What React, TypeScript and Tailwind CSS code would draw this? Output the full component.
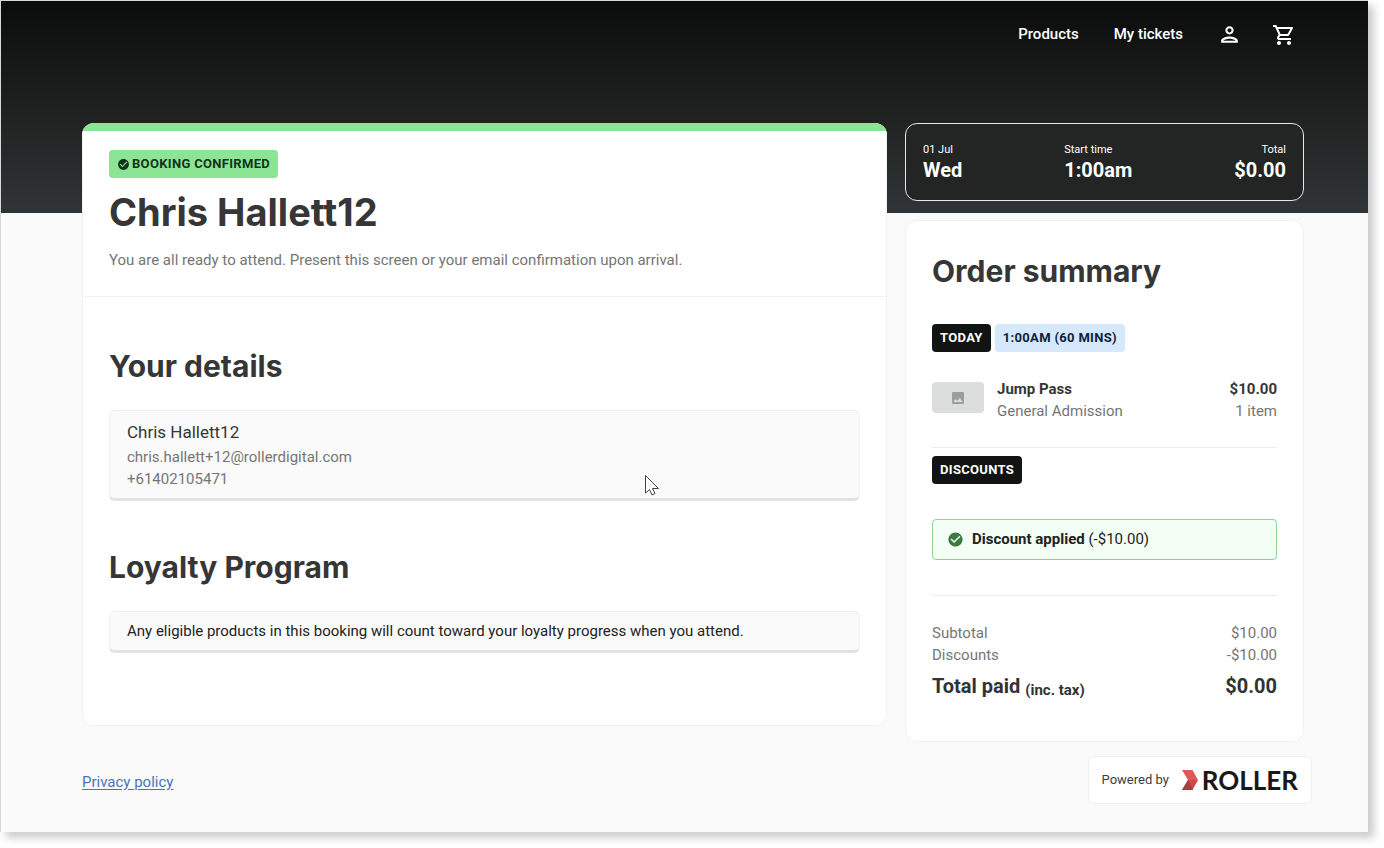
import type { ReactNode } from "react";
import { MdCheckCircle, MdImage, MdOutlinePerson, MdOutlineShoppingCart } from "react-icons/md";

function Heading({ children }: { children: ReactNode }) {
  return (
    <h2 className="font-['Inter',sans-serif] text-[30px] leading-10 font-bold text-[#363636]">{children}</h2>
  );
}

function Tag({ tone, children }: { tone: "dark" | "blue" | "green"; children: ReactNode }) {
  const tones = {
    dark: "bg-[#121413] text-white",
    blue: "bg-[#d6e8fb] text-[#0d2440]",
    green: "bg-[#8be594] text-[#12331a]",
  };
  return (
    <span
      className={`inline-flex h-7 items-center gap-0.5 rounded px-2 text-[13px] leading-5 font-bold tracking-wide uppercase ${tones[tone]}`}
    >
      {children}
    </span>
  );
}

function Panel({ children }: { children: ReactNode }) {
  return (
    <div className="mt-6 rounded-md border border-b-3 border-[#efefef] border-b-[#e2e2e2] bg-[#fafafa] px-[17px] py-2">
      {children}
    </div>
  );
}

function Stat({ label, value, align }: { label: string; value: string; align?: string }) {
  return (
    <div className={align}>
      <dt className="text-[11px] leading-4">{label}</dt>
      <dd className="text-xl leading-6 font-bold">{value}</dd>
    </div>
  );
}

function Row({ label, value }: { label: string; value: string }) {
  return (
    <div className="flex justify-between text-[15px] leading-[22px] text-[#757575]">
      <dt>{label}</dt>
      <dd>{value}</dd>
    </div>
  );
}

function NavBar() {
  return (
    <nav className="flex h-[67px] items-center justify-end pr-2 text-[15px] font-medium text-white">
      <a href="#products">Products</a>
      <a href="#tickets" className="ml-[35px]">My tickets</a>
      <button type="button" aria-label="Account" className="ml-[34px]">
        <MdOutlinePerson size={25} />
      </button>
      <button type="button" aria-label="Cart" className="ml-[30px]">
        <MdOutlineShoppingCart size={24} />
      </button>
    </nav>
  );
}

function Booking() {
  return (
    <section className="self-start overflow-hidden rounded-xl bg-white">
      <div className="h-2 bg-[#8be594]" />
      <div className="rounded-b-xl border border-t-0 border-[#f1f1f1]">
        <div className="border-b border-[#f1f1f1] px-[26px] pt-[19px] pb-6">
          <div className="flex">
            <Tag tone="green">
              <MdCheckCircle size={13} />
              Booking confirmed
            </Tag>
          </div>
          <h1 className="mt-2.5 font-['Inter',sans-serif] text-[38px] leading-12 font-bold text-[#363636]">
            Chris Hallett12
          </h1>
          <p className="mt-3 text-[15px] leading-6 text-[#757575]">
            You are all ready to attend. Present this screen or your email confirmation upon arrival.
          </p>
        </div>
        <div className="px-[26px] pt-[49px] pb-[72px]">
          <Heading>Your details</Heading>
          <Panel>
            <p className="text-[17px] leading-[27px] text-[#363636]">Chris Hallett12</p>
            <p className="text-[15px] leading-[22px] text-[#757575]">chris.hallett+12@rollerdigital.com</p>
            <p className="text-[15px] leading-[22px] text-[#757575]">+61402105471</p>
          </Panel>
          <div className="mt-[46px]">
            <Heading>Loyalty Program</Heading>
          </div>
          <Panel>
            <p className="text-[15px] leading-[22px] text-[#222]">
              Any eligible products in this booking will count toward your loyalty progress when you attend.
            </p>
          </Panel>
        </div>
      </div>
    </section>
  );
}

function OrderSummary() {
  return (
    <section className="mt-[19px] rounded-xl border border-[#f1f1f1] bg-white px-[26px] pt-[30px] pb-[41px]">
      <Heading>Order summary</Heading>
      <div className="mt-[33px] flex gap-1">
        <Tag tone="dark">Today</Tag>
        <Tag tone="blue">1:00am (60 mins)</Tag>
      </div>
      <div className="mt-[26px] flex items-start text-[15px] leading-[22px]">
        <div className="mt-1 flex h-[31px] w-[52px] items-center justify-center rounded bg-[#dcdedd] text-[#9c9e9d]">
          <MdImage size={16} />
        </div>
        <div className="ml-[13px] flex-1">
          <p className="font-bold text-[#363636]">Jump Pass</p>
          <p className="text-[#757575]">General Admission</p>
        </div>
        <div className="text-right">
          <p className="font-bold text-[#363636]">$10.00</p>
          <p className="text-[#757575]">1 item</p>
        </div>
      </div>
      <hr className="mt-[25px] border-[#ececec]" />
      <div className="mt-2 flex">
        <Tag tone="dark">Discounts</Tag>
      </div>
      <div className="mt-[35px] flex h-[41px] items-center rounded border border-[#8fd197] bg-[#f3fef4] px-3.5 text-[15px] text-[#222]">
        <MdCheckCircle size={17} className="text-[#3c7a45]" />
        <p className="ml-2">
          <strong>Discount applied</strong> (-$10.00)
        </p>
      </div>
      <hr className="mt-[35px] border-[#ececec]" />
      <dl className="mt-[26px]">
        <Row label="Subtotal" value="$10.00" />
        <Row label="Discounts" value="-$10.00" />
        <div className="mt-1.5 flex h-7 justify-between text-xl leading-7 font-bold text-[#303334]">
          <dt>
            Total paid <span className="align-[-2px] text-[15px] leading-none">(inc. tax)</span>
          </dt>
          <dd>$0.00</dd>
        </div>
      </dl>
    </section>
  );
}

function RollerBadge() {
  return (
    <div className="-mr-2 flex h-12 items-center rounded border border-[#f1f1f1] bg-white px-[13px] text-[13px] text-[#3c3c3c]">
      Powered by
      <svg viewBox="0 0 16 20" className="ml-[13px] h-5 w-4" aria-hidden="true">
        <path d="M0 0h10.5L16 10H6z" fill="#df5757" />
        <path d="M6 10h10l-5.500 10H0z" fill="#c94a49" />
        <path d="M0 20 6 10l5 10z" fill="#a83f3e" />
      </svg>
      <span className="ml-1 font-['Lato',sans-serif] text-[26px] leading-8 font-bold text-[#191919]">ROLLER</span>
    </div>
  );
}

export default function App() {
  return (
    <div className="min-h-screen bg-white pr-4 pb-4 font-['Roboto',sans-serif]">
      <div className="relative border-t border-l border-[#d5d8d6] bg-[#fafafa] bg-[linear-gradient(#0a0c0b,#1e201f_50%,#303436)] bg-[length:100%_212px] bg-no-repeat pr-16 pl-[81px] shadow-[6px_6px_8px_rgba(0,0,0,0.2)]">
        <NavBar />
        <main className="mt-[55px] grid grid-cols-[minmax(0,1fr)_399px] gap-[18px]">
          <Booking />
          <div>
            <dl className="flex h-[78px] justify-between rounded-xl border border-[#e6e8e7] bg-[#232524] px-[17px] pt-[18px] text-white">
              <Stat label="01 Jul" value="Wed" />
              <Stat label="Start time" value="1:00am" />
              <Stat label="Total" value="$0.00" align="text-right" />
            </dl>
            <OrderSummary />
          </div>
        </main>
        <footer className="flex items-center justify-between pt-3.5 pb-7">
          <a href="#privacy" className="pt-1 text-[15px] text-[#4a73b8] underline underline-offset-2">
            Privacy policy
          </a>
          <RollerBadge />
        </footer>
        <svg viewBox="0 0 14 21" className="absolute top-[474px] left-[644px] h-[21px] w-3.5" aria-hidden="true">
          <path d="M.5 .5v17.500l4-3.500 2.500 5.500 3-1.500-2.500-5h6z" fill="#fff" stroke="#444" strokeWidth="1" />
        </svg>
      </div>
    </div>
  );
}
